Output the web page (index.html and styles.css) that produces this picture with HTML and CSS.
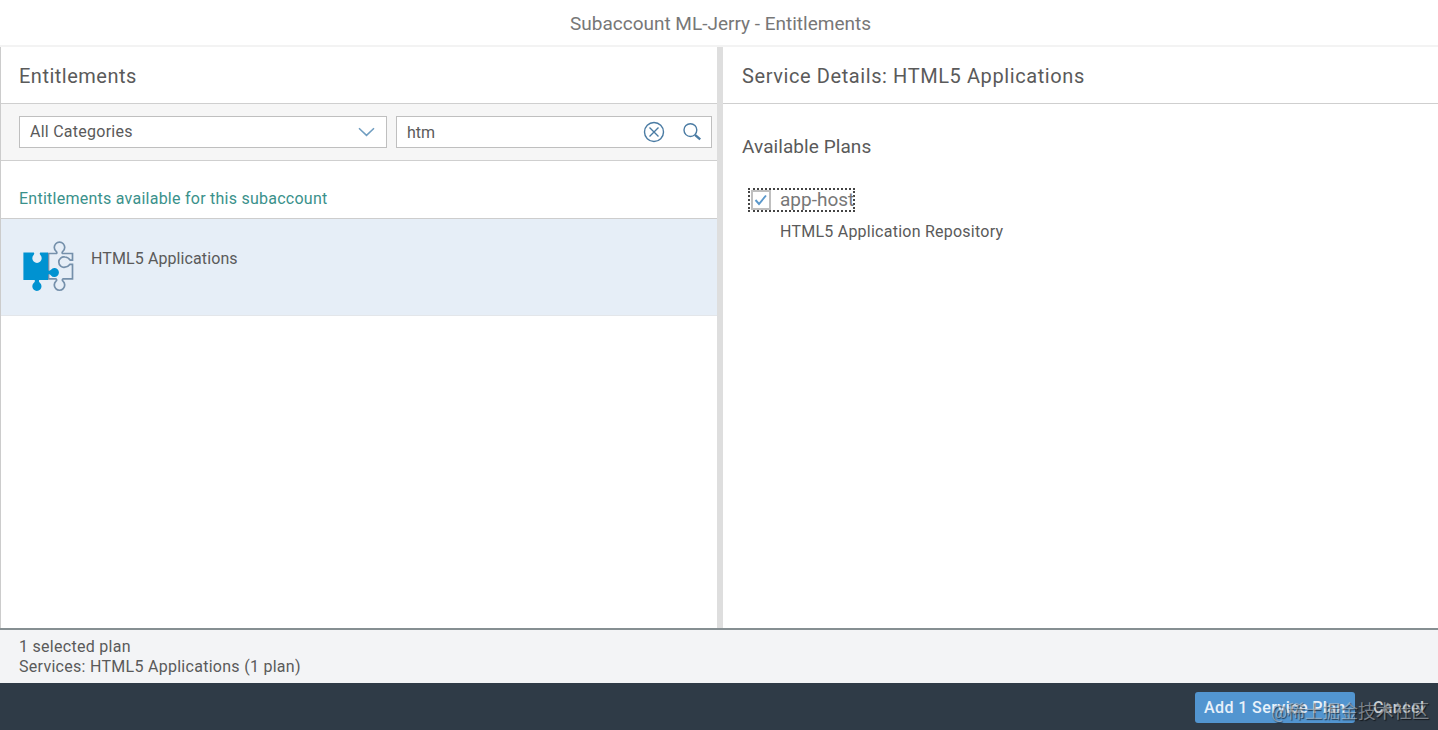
FILE: index.html
```html
<!DOCTYPE html>
<html lang="en">
<head>
  <meta charset="UTF-8">
  <title>Subaccount ML-Jerry - Entitlements</title>
  <link rel="stylesheet" href="styles.css">
</head>
<body>
  <div class="dialog">
    <header class="dialog-header">Subaccount ML-Jerry - Entitlements</header>

    <main class="content">
      <section class="master">
        <h2 class="pane-title">Entitlements</h2>

        <div class="toolbar">
          <div class="select">
            <span class="select-value">All Categories</span>
            <svg width="17" height="10" viewBox="0 0 17 10"><path d="M1 1.2L8.5 8.4L16 1.2"/></svg>
          </div>
          <div class="search">
            <span>htm</span>
            <svg class="clear" width="22" height="22" viewBox="0 0 22 22"><circle cx="11" cy="11" r="9.5"/><path d="M6.5 6.5L15.5 15.5M15.5 6.5L6.5 15.5"/></svg>
            <svg class="find" width="20" height="20" viewBox="0 0 20 20"><circle cx="8.4" cy="8.1" r="6.4"/><path class="handle" d="M13 12.8L18.2 17.4"/></svg>
          </div>
        </div>

        <div class="group-header">Entitlements available for this subaccount</div>

        <div class="item">
          <svg class="puzzle" width="54" height="54" viewBox="0 0 54 54">
            <path class="outline" d="M26.5 13.5H34.2C35.2 13.5 35 12 34 11.2A5.2 5.2 0 1 1 41 11.2C40 12 39.8 13.5 40.8 13.5H50.5V20.2H48.3C46.5 17.6 44.9 17 43 17A5.2 5.2 0 1 0 43 27.2C45.2 27.2 46.4 26.2 47.8 24.4H50.5V38.9H41.2C40.2 38.9 40 40.4 41 41.2A5.2 5.2 0 1 1 34 41.2C35 40.4 34.8 38.9 33.8 38.9H26.5Z"/>
            <path class="solid" d="M1.4 12.6H11.6C12.4 12.6 12.5 14 11.6 15A4.7 4.7 0 1 0 18.4 15C17.5 14 17.6 12.6 18.4 12.6H26V30.6C27.6 30.9 28.2 30.3 29 29.7A4.5 4.5 0 1 1 29 35.5C28.2 34.8 27.6 34.1 26 34.4V40H17.2C16.6 41.2 17 42 17.9 42.8A4.6 4.6 0 1 1 11.9 42.8C12.8 42 13.2 41.2 12.6 40H1.4Z"/>
          </svg>
          <span class="item-title">HTML5 Applications</span>
        </div>
      </section>

      <section class="detail">
        <h2 class="pane-title service-title">Service Details: HTML5 Applications</h2>
        <div class="plans">
          <h3>Available Plans</h3>
          <div class="plan">
            <span class="checkbox"><svg width="14" height="12" viewBox="0 0 14 12"><path d="M1.5 6L5 10L12 1.5"/></svg></span>
            <span class="plan-name">app-host</span>
          </div>
          <p>HTML5 Application Repository</p>
        </div>
      </section>
    </main>

    <div class="summary">
      <div>1 selected plan</div>
      <div>Services: HTML5 Applications (1 plan)</div>
    </div>

    <footer class="footer">
      <button class="btn primary">Add 1 Service Plan</button>
      <button class="btn">Cancel</button>
      <div class="watermark">@稀土掘金技术社区</div>
    </footer>
  </div>
</body>
</html>
```

FILE: styles.css
```css
* {
  box-sizing: border-box;
}

body {
  margin: 0;
  background: #fff;
  font-family: Roboto, "Liberation Sans", sans-serif;
  font-size: 16px;
  color: #5a5a5a;
}

svg {
  display: block;
  fill: none;
  flex: none;
}

.dialog {
  display: flex;
  flex-direction: column;
  height: 730px;
  overflow: hidden;
}

.dialog-header {
  height: 47px;
  border-bottom: 2px solid #f3f3f3;
  text-align: center;
  line-height: 48px;
  font-size: 19px;
  color: #777;
  padding-left: 3px;
}

.content {
  flex: 1;
  display: flex;
  min-height: 0;
}

.master {
  width: 723px;
  border-left: 1px solid #ccc;
  border-right: 6px solid #dedede;
}

.detail {
  flex: 1;
}

.pane-title {
  margin: 0;
  height: 57px;
  border-bottom: 1px solid #cfcfcf;
  padding-left: 18px;
  line-height: 58px;
  font-size: 20px;
  font-weight: 400;
  letter-spacing: 0.5px;
}

.service-title {
  padding-left: 19px;
  letter-spacing: 0.59px;
}

.toolbar {
  display: flex;
  gap: 9px;
  height: 57px;
  padding: 12px 5px 0 18px;
  background: #f6f6f6;
  border-bottom: 1px solid #cfcfcf;
}

.select,
.search {
  display: flex;
  align-items: center;
  height: 32px;
  border: 1px solid #bfbfbf;
  background: #fff;
  padding: 0 11px 0 10px;
}

.select {
  width: 368px;
  justify-content: space-between;
}

.select-value {
  padding-bottom: 2px;
  letter-spacing: 0.25px;
}

.select svg {
  stroke: #6f9dc0;
  stroke-width: 1.5;
}

.search {
  flex: 1;
  padding-right: 9px;
}

.search svg {
  stroke: #4a7ba3;
  stroke-width: 1.4;
}

.clear {
  margin-left: auto;
}

.find {
  margin-left: 17px;
}

.search .handle {
  stroke-width: 2.4;
}

.group-header {
  height: 58px;
  padding: 10px 0 0 18px;
  border-bottom: 1px solid #cdcdcd;
  line-height: 56px;
  letter-spacing: 0.25px;
  color: #3a918b;
}

.item {
  display: flex;
  height: 97px;
  padding: 21px 0 0 21px;
  background: #e6eef7;
  border-bottom: 1px solid #e3e6ea;
}

.item-title {
  margin: 9px 0 0 15px;
  letter-spacing: 0.1px;
}

.puzzle .outline {
  stroke: #7590ab;
  stroke-width: 1.7;
}

.puzzle .solid {
  fill: #0092d1;
}

.plans {
  padding: 30px 19px;
}

.plans h3 {
  margin: 0;
  font-size: 19px;
  font-weight: 400;
  line-height: 26px;
  letter-spacing: 0.07px;
}

.plan {
  display: flex;
  align-items: center;
  width: 107px;
  height: 24px;
  margin: 28px 0 0 6px;
  border: 2px dotted #444;
  font-size: 19px;
  color: #777;
  white-space: nowrap;
}

.plan-name {
  padding-bottom: 2px;
}

.checkbox {
  display: flex;
  align-items: center;
  justify-content: center;
  width: 20px;
  height: 20px;
  margin: 0 9px 0 1px;
  flex: none;
  border: 2px solid #bfbfbf;
}

.checkbox svg {
  stroke: #5b98cb;
  stroke-width: 1.9;
}

.plans p {
  margin: 8px 0 0 38px;
  line-height: 24px;
  letter-spacing: 0.24px;
}

.summary {
  height: 55px;
  padding: 7px 19px 0;
  background: #f3f4f6;
  border-top: 2px solid #868f92;
  line-height: 19.5px;
  letter-spacing: 0.28px;
}

.footer {
  position: relative;
  display: flex;
  gap: 9px;
  height: 47px;
  padding: 9px 0 0 1195px;
  background: #2f3b47;
}

.btn {
  height: 31px;
  padding: 0 9px;
  border: 0;
  border-radius: 3px;
  background: none;
  font: 500 16px Roboto, sans-serif;
  line-height: 31px;
  letter-spacing: 0.4px;
  color: #c9ced3;
  text-align: left;
  white-space: nowrap;
}

.primary {
  width: 160px;
  background: #5295d0;
  color: #e8f1fa;
}

.watermark {
  position: absolute;
  left: 1271px;
  top: 17px;
  font-family: Roboto, "Noto Sans CJK SC", sans-serif;
  font-size: 17.8px;
  line-height: 24px;
  color: rgba(200, 205, 210, 0.55);
  text-shadow: 1px 1px 1px rgba(0, 0, 0, 0.6);
  white-space: nowrap;
}
```
